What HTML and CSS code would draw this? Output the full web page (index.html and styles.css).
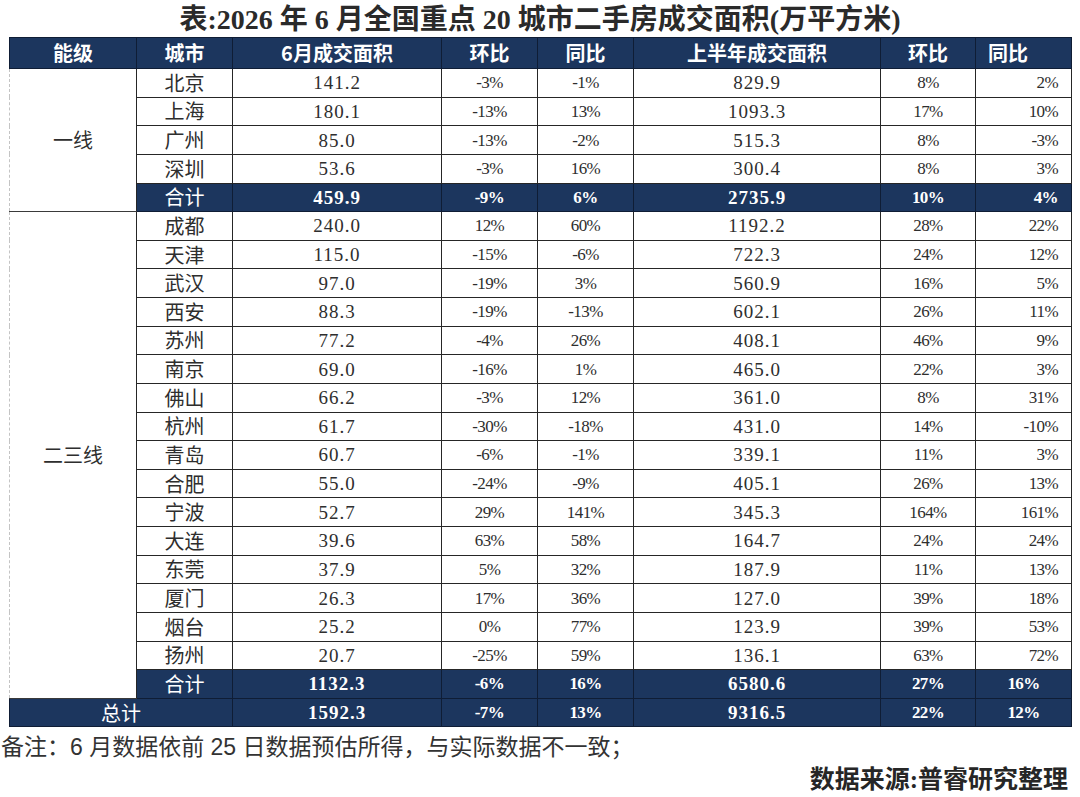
FILE: index.html
```html
<!DOCTYPE html>
<html lang="zh-CN">
<head>
<meta charset="utf-8">
<title>2026年6月全国重点20城市二手房成交面积</title>
<link rel="stylesheet" href="styles.css">
</head>
<body>
<div class="page">
  <h1 class="title">表:2026 年 6 月全国重点 20 城市二手房成交面积(万平方米)</h1>
  <table class="data">
    <colgroup>
      <col class="c-tier"><col class="c-city"><col class="c-area"><col class="c-pct"><col class="c-pct"><col class="c-half"><col class="c-pct2"><col class="c-pct">
    </colgroup>
    <thead>
      <tr>
        <th>能级</th><th>城市</th><th>6月成交面积</th><th>环比</th><th>同比</th><th>上半年成交面积</th><th>环比</th><th class="left">同比</th>
      </tr>
    </thead>
    <tbody>
      <tr><td class="tier first" rowspan="5">一线</td><td class="city">北京</td><td class="num">141.2</td><td class="pct">-3%</td><td class="pct">-1%</td><td class="num">829.9</td><td class="pct">8%</td><td class="pct right">2%</td></tr>
      <tr><td class="city">上海</td><td class="num">180.1</td><td class="pct">-13%</td><td class="pct">13%</td><td class="num">1093.3</td><td class="pct">17%</td><td class="pct right">10%</td></tr>
      <tr><td class="city">广州</td><td class="num">85.0</td><td class="pct">-13%</td><td class="pct">-2%</td><td class="num">515.3</td><td class="pct">8%</td><td class="pct right">-3%</td></tr>
      <tr><td class="city">深圳</td><td class="num">53.6</td><td class="pct">-3%</td><td class="pct">16%</td><td class="num">300.4</td><td class="pct">8%</td><td class="pct right">3%</td></tr>
      <tr class="sum"><td class="city">合计</td><td class="num">459.9</td><td class="pct">-9%</td><td class="pct">6%</td><td class="num">2735.9</td><td class="pct">10%</td><td class="pct right">4%</td></tr>

      <tr><td class="tier" rowspan="17">二三线</td><td class="city">成都</td><td class="num">240.0</td><td class="pct">12%</td><td class="pct">60%</td><td class="num">1192.2</td><td class="pct">28%</td><td class="pct right">22%</td></tr>
      <tr><td class="city">天津</td><td class="num">115.0</td><td class="pct">-15%</td><td class="pct">-6%</td><td class="num">722.3</td><td class="pct">24%</td><td class="pct right">12%</td></tr>
      <tr><td class="city">武汉</td><td class="num">97.0</td><td class="pct">-19%</td><td class="pct">3%</td><td class="num">560.9</td><td class="pct">16%</td><td class="pct right">5%</td></tr>
      <tr><td class="city">西安</td><td class="num">88.3</td><td class="pct">-19%</td><td class="pct">-13%</td><td class="num">602.1</td><td class="pct">26%</td><td class="pct right">11%</td></tr>
      <tr><td class="city">苏州</td><td class="num">77.2</td><td class="pct">-4%</td><td class="pct">26%</td><td class="num">408.1</td><td class="pct">46%</td><td class="pct right">9%</td></tr>
      <tr><td class="city">南京</td><td class="num">69.0</td><td class="pct">-16%</td><td class="pct">1%</td><td class="num">465.0</td><td class="pct">22%</td><td class="pct right">3%</td></tr>
      <tr><td class="city">佛山</td><td class="num">66.2</td><td class="pct">-3%</td><td class="pct">12%</td><td class="num">361.0</td><td class="pct">8%</td><td class="pct right">31%</td></tr>
      <tr><td class="city">杭州</td><td class="num">61.7</td><td class="pct">-30%</td><td class="pct">-18%</td><td class="num">431.0</td><td class="pct">14%</td><td class="pct right">-10%</td></tr>
      <tr><td class="city">青岛</td><td class="num">60.7</td><td class="pct">-6%</td><td class="pct">-1%</td><td class="num">339.1</td><td class="pct">11%</td><td class="pct right">3%</td></tr>
      <tr><td class="city">合肥</td><td class="num">55.0</td><td class="pct">-24%</td><td class="pct">-9%</td><td class="num">405.1</td><td class="pct">26%</td><td class="pct right">13%</td></tr>
      <tr><td class="city">宁波</td><td class="num">52.7</td><td class="pct">29%</td><td class="pct">141%</td><td class="num">345.3</td><td class="pct">164%</td><td class="pct right">161%</td></tr>
      <tr><td class="city">大连</td><td class="num">39.6</td><td class="pct">63%</td><td class="pct">58%</td><td class="num">164.7</td><td class="pct">24%</td><td class="pct right">24%</td></tr>
      <tr><td class="city">东莞</td><td class="num">37.9</td><td class="pct">5%</td><td class="pct">32%</td><td class="num">187.9</td><td class="pct">11%</td><td class="pct right">13%</td></tr>
      <tr><td class="city">厦门</td><td class="num">26.3</td><td class="pct">17%</td><td class="pct">36%</td><td class="num">127.0</td><td class="pct">39%</td><td class="pct right">18%</td></tr>
      <tr><td class="city">烟台</td><td class="num">25.2</td><td class="pct">0%</td><td class="pct">77%</td><td class="num">123.9</td><td class="pct">39%</td><td class="pct right">53%</td></tr>
      <tr><td class="city">扬州</td><td class="num">20.7</td><td class="pct">-25%</td><td class="pct">59%</td><td class="num">136.1</td><td class="pct">63%</td><td class="pct right">72%</td></tr>
      <tr class="sum"><td class="city">合计</td><td class="num">1132.3</td><td class="pct">-6%</td><td class="pct">16%</td><td class="num">6580.6</td><td class="pct">27%</td><td class="pct">16%</td></tr>

      <tr class="sum total"><td class="city" colspan="2">总计</td><td class="num">1592.3</td><td class="pct">-7%</td><td class="pct">13%</td><td class="num">9316.5</td><td class="pct">22%</td><td class="pct">12%</td></tr>
    </tbody>
  </table>
  <p class="note">备注：6 月数据依前 25 日数据预估所得，与实际数据不一致；</p>
  <p class="source">数据来源:普睿研究整理</p>
</div>
</body>
</html>
```

FILE: styles.css
```css
html, body {
  margin: 0;
  padding: 0;
  background: #ffffff;
}

body {
  width: 1080px;
  height: 797px;
  overflow: hidden;
  font-family: "Liberation Serif", "Noto Sans CJK SC", serif;
  color: #2b2b2b;
}

.page {
  display: flex;
  flex-direction: column;
}

.title {
  margin: 0;
  height: 37px;
  line-height: 40px;
  text-align: center;
  font-family: "Liberation Serif", "Noto Sans CJK SC", serif;
  font-size: 28px;
  font-weight: 700;
  color: #2a2a2a;
}

.data {
  margin-left: 9px;
  width: 1062px;
  table-layout: fixed;
  border-collapse: collapse;
}

.c-tier { width: 127px; }
.c-city { width: 96px; }
.c-area { width: 209px; }
.c-pct  { width: 96px; }
.c-half { width: 247px; }
.c-pct2 { width: 95px; }

.data th {
  height: 30px;
  padding: 0;
  background: #1c365e;
  color: #ffffff;
  font-family: "Noto Sans CJK SC", sans-serif;
  font-size: 20px;
  font-weight: 700;
  text-align: center;
  border: 1px solid #0f1d35;
  line-height: 1;
}

.data th.left {
  text-align: left;
  padding-left: 12px;
}

.data td {
  height: 27.64px;
  padding: 0;
  border: 1px solid #262626;
  text-align: center;
  vertical-align: middle;
  line-height: 1;
  color: #2e2e2e;
}

.data td.tier {
  font-family: "Noto Sans CJK SC", sans-serif;
  font-size: 20px;
  border-left: 1px dashed #c4c4c4;
  border-bottom: 1px solid #3a3a3a;
  background: #ffffff;
}

.data td.city {
  font-family: "Noto Sans CJK SC", sans-serif;
  font-size: 20px;
}

.data td.num {
  font-family: "Liberation Serif", serif;
  font-size: 19px;
  letter-spacing: 1px;
}

.data td.pct {
  font-family: "Liberation Serif", serif;
  font-size: 17px;
  letter-spacing: -0.6px;
}

.data td.right {
  text-align: right;
  padding-right: 13px;
}

.data tr.sum td {
  background: #1c365e;
  color: #ffffff;
  border-color: #0f1d35;
}

.data tr.sum td.num,
.data tr.sum td.pct {
  font-weight: 700;
}

.note {
  margin: 7px 0 0 1px;
  font-family: "Liberation Sans", "Noto Sans CJK SC", sans-serif;
  font-size: 23px;
  line-height: 26px;
  color: #333333;
}

.source {
  margin: 5px 12px 0 0;
  text-align: right;
  font-family: "Liberation Serif", "Noto Sans CJK SC", serif;
  font-size: 25px;
  font-weight: 700;
  line-height: 30px;
  color: #262626;
}
```
